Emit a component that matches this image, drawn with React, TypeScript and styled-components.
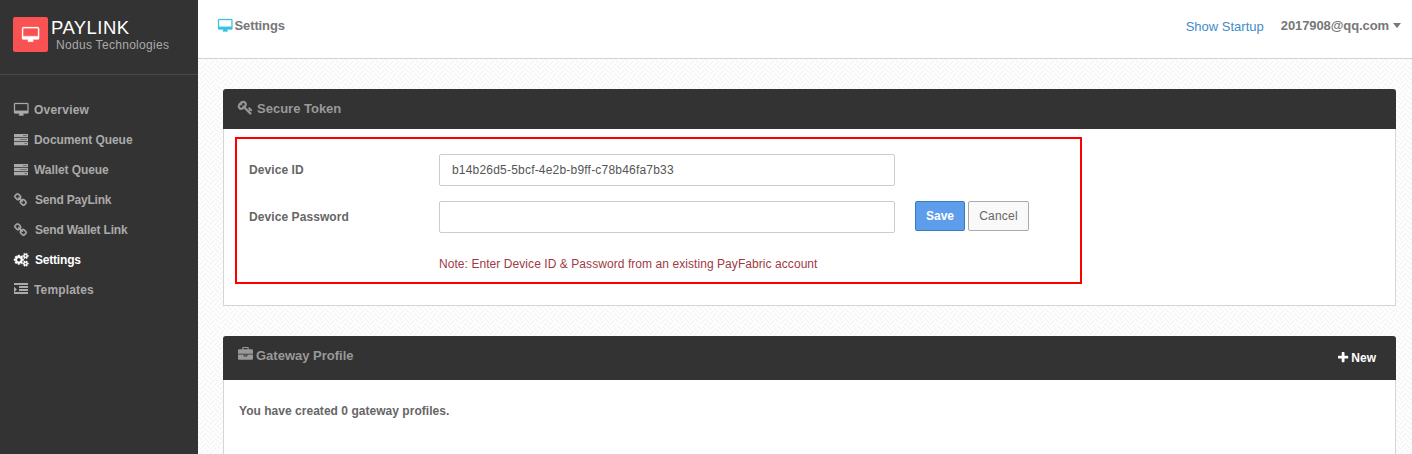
import React from "react";
import styled, { createGlobalStyle } from "styled-components";

const GlobalStyle = createGlobalStyle`
  * { box-sizing: border-box; }
  html, body { margin: 0; height: 100%; overflow: hidden; }
  body { font: 12px/20px "Liberation Sans", Arial, sans-serif; color: #676767; }
`;

const paths = {
  desktop: { w: 1920, d: "M1792 992v-832q0-13-9.500-22.500t-22.500-9.500h-1600q-13 0-22.500 9.500t-9.500 22.500v832q0 13 9.500 22.500t22.500 9.500h1600q13 0 22.500-9.500t9.500-22.500zM1920 160v1088q0 66-47 113t-113 47h-544q0 37 16 77.500t32 71 16 43.500q0 26-19 45t-45 19h-512q-26 0-45-19t-19-45q0-14 16-44t32-70 16-78h-544q-66 0-113-47t-47-113v-1088q0-66 47-113t113-47h1600q66 0 113 47t47 113z" },
  server: { w: 1792, d: "M0 128h1792v400h-1792zM0 640h1792v400h-1792zM0 1152h1792v400h-1792zM1150 300v60h500v-60zM768 810v60h882v-60zM1350 1320v70h300v-70z" },
  link: { w: 1664, d: "M1456 1216q0-40-28-68l-208-208q-28-28-68-28-42 0-72 32 3 3 19 18.500t21.500 21.500 15 19 13 25.500 3.500 27.500q0 40-28 68t-68 28q-15 0-27.500-3.500t-25.500-13-19-15-21.500-21.500-18.500-19q-33 31-33 73 0 40 28 68l206 207q27 27 68 27 40 0 68-26l147-146q28-28 28-67zM753 511q0-40-28-68l-206-207q-28-28-68-28-39 0-68 27l-147 146q-28 28-28 67 0 40 28 68l208 208q27 27 68 27 42 0 72-31-3-3-19-18.500t-21.500-21.500-15-19-13-25.500-3.500-27.500q0-40 28-68t68-28q15 0 27.500 3.500t25.500 13 19 15 21.500 21.500 18.500 19q33-31 33-73zM1648 1216q0 120-85 203l-147 146q-83 83-203 83-121 0-204-85l-206-207q-83-83-83-203 0-123 88-209l-88-88q-86 88-208 88-120 0-204-84l-208-208q-84-84-84-204t85-203l147-146q83-83 203-83 121 0 204 85l206 207q83 83 83 203 0 123-88 209l88 88q86-88 208-88 120 0 204 84l208 208q84 84 84 204z" },
  cogs: { w: 1920, d: "M896 896q0-106-75-181t-181-75-181 75-75 181 75 181 181 75 181-75 75-181zM1664 1408q0-52-38-90t-90-38-90 38-38 90q0 53 37.500 90.500t90.500 37.500 90.500-37.500 37.500-90.500zM1664 384q0-52-38-90t-90-38-90 38-38 90q0 53 37.500 90.500t90.500 37.500 90.500-37.500 37.500-90.500zM1280 805v185q0 10-7 19.500t-16 10.500l-155 24q-11 35-32 76 34 48 90 115 7 11 7 20 0 12-7 19-23 30-82.500 89.500t-78.500 59.500q-11 0-21-7l-115-90q-37 19-77 31-11 108-23 155-7 24-30 24h-186q-11 0-20-7.500t-10-17.500l-23-153q-34-10-75-31l-118 89q-7 7-20 7-11 0-21-8-144-133-144-160 0-9 7-19 10-14 41-53t47-61q-23-44-35-82l-152-24q-10-1-17-9.500t-7-19.500v-185q0-10 7-19.500t16-10.500l155-24q11-35 32-76-34-48-90-115-7-11-7-20 0-12 7-20 22-30 82-89t79-59q11 0 21 7l115 90q34-18 77-32 11-108 23-154 7-24 30-24h186q11 0 20 7.500t10 17.500l23 153q34 10 75 31l118-89q8-7 20-7 11 0 21 8 144 133 144 160 0 8-7 19-12 16-42 54t-45 60q23 48 34 82l152 23q10 2 17 10.500t7 19.500zM1920 1338v140q0 16-149 31-12 27-30 52 51 113 51 138 0 4-4 7-122 71-124 71-8 0-46-47t-52-68q-20 2-30 2t-30-2q-14 21-52 68t-46 47q-2 0-124-71-4-3-4-7 0-25 51-138-18-25-30-52-149-15-149-31v-140q0-16 149-31 13-29 30-52-51-113-51-138 0-4 4-7 4-2 35-20t59-34 30-16q8 0 46 46.500t52 67.500q20-2 30-2t30 2q51-71 92-112l6-2q4 0 124 70 4 3 4 7 0 25-51 138 17 23 30 52 149 15 149 31zM1920 314v140q0 16-149 31-12 27-30 52 51 113 51 138 0 4-4 7-122 71-124 71-8 0-46-47t-52-68q-20 2-30 2t-30-2q-14 21-52 68t-46 47q-2 0-124-71-4-3-4-7 0-25 51-138-18-25-30-52-149-15-149-31v-140q0-16 149-31 13-29 30-52-51-113-51-138 0-4 4-7 4-2 35-20t59-34 30-16q8 0 46 46.500t52 67.500q20-2 30-2t30 2q51-71 92-112l6-2q4 0 124 70 4 3 4 7 0 25-51 138 17 23 30 52 149 15 149 31z" },
  indent: { w: 1792, d: "M352 832q0 14-9 23l-288 288q-9 9-23 9-13 0-22.500-9.500t-9.500-22.500v-576q0-13 9.500-22.500t22.500-9.500q14 0 23 9l288 288q9 9 9 23zM1792 1184v192q0 13-9.500 22.500t-22.500 9.500h-1728q-13 0-22.500-9.500t-9.500-22.500v-192q0-13 9.500-22.500t22.500-9.500h1728q13 0 22.500 9.500t9.500 22.500zM1792 800v192q0 13-9.500 22.500t-22.500 9.500h-1088q-13 0-22.500-9.500t-9.500-22.500v-192q0-13 9.500-22.500t22.500-9.500h1088q13 0 22.500 9.500t9.500 22.500zM1792 416v192q0 13-9.500 22.500t-22.500 9.500h-1088q-13 0-22.500-9.500t-9.500-22.500v-192q0-13 9.500-22.500t22.500-9.500h1088q13 0 22.500 9.500t9.500 22.500zM1792 32v192q0 13-9.500 22.500t-22.500 9.500h-1728q-13 0-22.500-9.500t-9.500-22.500v-192q0-13 9.500-22.500t22.500-9.500h1728q13 0 22.500 9.500t9.500 22.500z" },
  key: { w: 1792, d: "M832 512q0-80-56-136t-136-56-136 56-56 136q0 42 19 83-41-19-83-19-80 0-136 56t-56 136 56 136 136 56 136-56 56-136q0-42-19-83 41 19 83 19 80 0 136-56t56-136zM1683 1216q0 17-49 66t-66 49q-9 0-28.500-16t-36.500-33-38.500-40-24.500-26l-96 96 220 220q28 28 28 68 0 42-39 81t-81 39q-40 0-68-28l-671-671q-176 131-365 131-163 0-265.500-102.500t-102.500-265.500q0-160 95-313t248-248 313-95q163 0 265.500 102.500t102.500 265.500q0 189-131 365l355 355 96-96q-3-3-26-24.500t-40-38.500-33-36.500-16-28.500q0-17 49-66t66-49q13 0 23 10 6 6 46 44.500t82 79.500 86.500 86 73 78 28.500 41z" },
  briefcase: { w: 1792, d: "M640 256h512v-128h-512v128zM1792 896v480q0 66-47 113t-113 47h-1472q-66 0-113-47t-47-113v-480h672v160q0 26 19 45t45 19h320q26 0 45-19t19-45v-160h672zM1024 896v128h-256v-128h256zM1792 416v384h-1792v-384q0-66 47-113t113-47h352v-160q0-40 28-68t68-28h576q40 0 68 28t28 68v160h352q66 0 113 47t47 113z" },
  plus: { w: 1408, d: "M1408 608v192q0 40-28 68t-68 28h-416v416q0 40-28 68t-68 28h-192q-40 0-68-28t-28-68v-416h-416q-40 0-68-28t-28-68v-192q0-40 28-68t68-28h416v-416q0-40 28-68t68-28h192q40 0 68 28t28 68v416h416q40 0 68 28t28 68z" },
};
type IconName = keyof typeof paths;

const Svg = styled.svg<{ $size: number; $color?: string; $weight: number }>`
  display: block;
  flex: none;
  overflow: visible;
  height: ${(p) => p.$size}px;
  color: ${(p) => p.$color ?? "inherit"};
  fill: currentColor;
  stroke: currentColor;
  stroke-width: ${(p) => p.$weight};
`;
const Icon = ({ name, size = 14, color, weight = 0 }: { name: IconName; size?: number; color?: string; weight?: number }) => (
  <Svg $size={size} $color={color} $weight={weight} width={(paths[name].w / 1792) * size} viewBox={`0 0 ${paths[name].w} 1792`}>
    <path fillRule="evenodd" d={paths[name].d} />
  </Svg>
);

const Page = styled.div`display: flex; height: 454px;`;
const Sidebar = styled.aside`width: 198px; flex: none; background: #333;`;
const Brand = styled.div`
  display: flex;
  height: 75px;
  padding: 17px 13px 0;
  border-bottom: 1px solid #484848;
`;
const Logo = styled.div`
  width: 35px; height: 35px; border-radius: 2px;
  background: #fa5252; color: #fff;
  display: flex; align-items: center; justify-content: center;
`;
const BrandText = styled.div`padding-left: 3px; white-space: nowrap;`;
const BrandName = styled.div`font-size: 18.5px; line-height: 21px; letter-spacing: 0.45px; color: #fff;`;
const Company = styled.div`
  font-size: 12px; line-height: 16px; margin-top: -1px; letter-spacing: 0.3px; color: #aaa; padding-left: 5px;
`;
const Menu = styled.nav`padding-top: 20px;`;
const MenuItem = styled.a<{ $active?: boolean; $tracking: number }>`
  display: flex; align-items: center; height: 30px; padding-left: 14px; white-space: nowrap;
  font-weight: bold; letter-spacing: ${(p) => p.$tracking}px; color: ${(p) => (p.$active ? "#fff" : "#aaa")};
`;
const MenuIcon = styled.span<{ $w: number }>`width: ${(p) => p.$w}px; flex: none;`;

const Main = styled.main`flex: 1; min-width: 0; display: flex; flex-direction: column;`;
const TopBar = styled.header`
  height: 59px; flex: none; background: #fff; border-bottom: 1px solid #d2d2d2;
  display: flex; justify-content: space-between; padding: 16px 11px 0 20px; font-size: 13px;
`;
const Title = styled.div`display: flex; gap: 2px; height: 20px; font-weight: bold; letter-spacing: -0.1px; color: #777;`;
const Account = styled.div`display: flex; height: 20px;`;
const Startup = styled.a`color: #428bca; padding-top: 1px; margin-right: 17px;`;
const User = styled.div`display: flex; font-weight: bold; letter-spacing: -0.09px; color: #777;`;
const Caret = styled.span`
  margin: 7px 0 0 4px; width: 8px; height: 5px;
  border: 4px solid transparent; border-top: 5px solid #777; border-bottom: 0;
`;
const Canvas = styled.div`
  position: relative; isolation: isolate;
  flex: 1; min-height: 0; overflow: hidden; padding: 30px 16px 0 25px; background: #fff;
`;
const Weave = styled.svg`position: absolute; inset: 0; width: 100%; height: 100%; z-index: -1;`;
const Panel = styled.section<{ $h: number }>`
  height: ${(p) => p.$h}px; margin-bottom: 30px; background: #fff;
  border: 1px solid #d5d5d5; border-top: 0; border-radius: 3px 3px 0 0;
`;
const PanelHead = styled.div<{ $h: number }>`
  height: ${(p) => p.$h}px; margin: 0 -1px; padding: 10px 20px 0 15px;
  background: #333; border-radius: 3px 3px 0 0;
  display: flex; justify-content: space-between;
  font-size: 13px; font-weight: bold; color: #999;
`;
const HeadTitle = styled.div<{ $gap: number }>`display: flex; gap: ${(p) => p.$gap}px;`;
const NewButton = styled.a`
  display: flex; gap: 3px; align-items: center; height: 20px; margin-top: 2px; font-size: 12px; color: #fff;
`;
const Highlight = styled.form`
  margin: 8px 0 0 11px; width: 847px; height: 147px; border: 2px solid #f00; padding: 15px 0 0 12px;
`;
const Row = styled.div`display: flex; height: 32px; margin-bottom: 15px; align-items: flex-start;`;
const Label = styled.label`width: 190px; font-weight: bold; line-height: 32px; letter-spacing: 0.08px; color: #666;`;
const Field = styled.input`
  width: 456px; height: 32px; border: 1px solid #ccc; border-radius: 2px; padding: 0 12px;
  font: 12px "Liberation Sans", Arial, sans-serif; letter-spacing: 0.2px;
  color: #555; background: #fff; margin-right: 20px; outline: 0;
`;
const Button = styled.button<{ $primary?: boolean }>`
  width: ${(p) => (p.$primary ? 50 : 61)}px; height: 30px; padding: 0; margin-right: 3px;
  border: 1px solid ${(p) => (p.$primary ? "#357ebd" : "#aaa")}; border-radius: 2px;
  background: ${(p) => (p.$primary ? "#5e9cec" : "#f9f9f9")};
  color: ${(p) => (p.$primary ? "#fff" : "#666")};
  font: ${(p) => (p.$primary ? "bold" : "normal")} 12px "Liberation Sans", Arial, sans-serif;
  letter-spacing: ${(p) => (p.$primary ? 0 : 0.2)}px;
`;
const Note = styled.div`margin-left: 190px; line-height: 32px; letter-spacing: 0.065px; color: #a03a44;`;
const Message = styled.div`padding: 21px 15px; font-weight: bold; letter-spacing: 0.03px; color: #666;`;
const Nudge = styled.span<{ $top: number }>`padding-top: ${(p) => p.$top}px;`;

const menu: { icon: IconName; label: string; w: number; tracking: number; size?: number; weight?: number; active?: boolean }[] = [
  { icon: "desktop", label: "Overview", w: 20, tracking: 0.22, size: 13.5, weight: 40 },
  { icon: "server", label: "Document Queue", w: 20, tracking: -0.06 },
  { icon: "server", label: "Wallet Queue", w: 20, tracking: -0.08 },
  { icon: "link", label: "Send PayLink", w: 21, tracking: -0.2, weight: 30 },
  { icon: "link", label: "Send Wallet Link", w: 21, tracking: -0.2, weight: 30 },
  { icon: "cogs", label: "Settings", w: 21, tracking: -0.2, weight: 50, size: 13.5, active: true },
  { icon: "indent", label: "Templates", w: 20, tracking: 0.16 },
];

export default function App() {
  return (
    <Page>
      <GlobalStyle />
      <Sidebar>
        <Brand>
          <Logo><Icon name="desktop" size={16} weight={30} /></Logo>
          <BrandText>
            <BrandName>PAYLINK</BrandName>
            <Company>Nodus Technologies</Company>
          </BrandText>
        </Brand>
        <Menu>
          {menu.map((m) => (
            <MenuItem key={m.label} $active={m.active} $tracking={m.tracking}>
              <MenuIcon $w={m.w}><Icon name={m.icon} size={m.size} weight={m.weight} /></MenuIcon>
              {m.label}
            </MenuItem>
          ))}
        </Menu>
      </Sidebar>
      <Main>
        <TopBar>
          <Title>
            <Nudge $top={3}><Icon name="desktop" size={13.5} color="#37c3e0" weight={40} /></Nudge>
            Settings
          </Title>
          <Account>
            <Startup>Show Startup</Startup>
            <User>2017908@qq.com<Caret /></User>
          </Account>
        </TopBar>
        <Canvas>
          <Weave>
            <defs>
              <pattern id="weave" width="8" height="8" patternUnits="userSpaceOnUse" patternTransform="scale(1.25)">
                <path
                  d="M-1 -3L3 1M-3 -1L1 3M7 -3L11 1M5 -1L9 3M-1 5L3 9M-3 7L1 11M7 5L11 9M5 7L9 11M1 5L5 1M3 7L7 3"
                  stroke="#e8e8e8" strokeWidth="0.7" fill="none"
                />
              </pattern>
            </defs>
            <rect width="100%" height="100%" fill="url(#weave)" />
          </Weave>
          <Panel $h={217}>
            <PanelHead $h={40}>
              <HeadTitle $gap={4}>
                <Nudge $top={1}><Icon name="key" size={15} weight={60} /></Nudge>
                Secure Token
              </HeadTitle>
            </PanelHead>
            <Highlight>
              <Row><Label>Device ID</Label><Field defaultValue="b14b26d5-5bcf-4e2b-b9ff-c78b46fa7b33" /></Row>
              <Row>
                <Label>Device Password</Label><Field type="password" />
                <Button type="button" $primary>Save</Button>
                <Button type="button">Cancel</Button>
              </Row>
              <Note>Note: Enter Device ID &amp; Password from an existing PayFabric account</Note>
            </Highlight>
          </Panel>
          <Panel $h={200}>
            <PanelHead $h={44}>
              <HeadTitle $gap={3}>
                <Nudge $top={1}><Icon name="briefcase" size={15} /></Nudge>
                Gateway Profile
              </HeadTitle>
              <NewButton><Icon name="plus" size={13} />New</NewButton>
            </PanelHead>
            <Message>You have created 0 gateway profiles.</Message>
          </Panel>
        </Canvas>
      </Main>
    </Page>
  );
}
